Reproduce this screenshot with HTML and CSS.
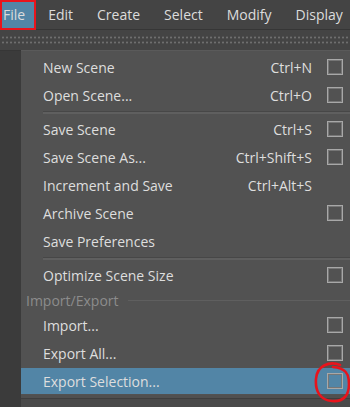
FILE: index.html
```html
<!DOCTYPE html>
<html lang="en">
<head>
    <meta charset="UTF-8">
    <title>File Menu</title>
    <link rel="stylesheet" href="styles.css">
</head>
<body>
    <div class="menubar">
        <span class="bar-item active">File</span>
        <span class="bar-item">Edit</span>
        <span class="bar-item">Create</span>
        <span class="bar-item">Select</span>
        <span class="bar-item">Modify</span>
        <span class="bar-item">Display</span>
    </div>
    <div class="shelf"></div>
    <div class="workspace">
        <div class="side"></div>
        <div class="menu">
            <div class="item"><span class="label">New Scene</span><span class="key">Ctrl+N</span><span class="box"></span></div>
            <div class="item"><span class="label">Open Scene...</span><span class="key">Ctrl+O</span><span class="box"></span></div>
            <div class="sep"></div>
            <div class="item"><span class="label">Save Scene</span><span class="key">Ctrl+S</span><span class="box"></span></div>
            <div class="item"><span class="label">Save Scene As...</span><span class="key">Ctrl+Shift+S</span><span class="box"></span></div>
            <div class="item"><span class="label">Increment and Save</span><span class="key">Ctrl+Alt+S</span><span class="nobox"></span></div>
            <div class="item"><span class="label">Archive Scene</span><span class="key"></span><span class="box"></span></div>
            <div class="item"><span class="label">Save Preferences</span><span class="key"></span><span class="nobox"></span></div>
            <div class="sep"></div>
            <div class="item"><span class="label">Optimize Scene Size</span><span class="key"></span><span class="box"></span></div>
            <div class="section"><span>Import/Export</span></div>
            <div class="item"><span class="label">Import...</span><span class="key"></span><span class="box"></span></div>
            <div class="item"><span class="label">Export All...</span><span class="key"></span><span class="box"></span></div>
            <div class="item hover"><span class="label">Export Selection...</span><span class="key"></span><span class="box"></span></div>
            <div class="menu-foot"></div>
        </div>
    </div>

    <!-- annotations -->
    <div class="mark-rect"></div>
    <svg class="mark-circle" width="40" height="44" viewBox="0 0 40 44">
        <path d="M28 5 C18 1 5 5 4 19 C3 31 8 40 20 41 C32 42 37 35 37 24 C37 13 33 8 21 7" fill="none" stroke="#e8141c" stroke-width="2.6" stroke-linecap="round"/>
    </svg>
</body>
</html>
```

FILE: styles.css
```css
* {
    margin: 0;
    padding: 0;
    box-sizing: border-box;
}

body {
    width: 350px;
    height: 407px;
    overflow: hidden;
    position: relative;
    background: #3b3b3b;
    font-family: 'Open Sans', 'Noto Sans', sans-serif;
    font-size: 14px;
    color: #dedede;
}

.menubar {
    height: 29px;
    display: flex;
    align-items: stretch;
    background: #444444;
    margin-left: -9px;
    white-space: nowrap;
    font-size: 14px;
}

.bar-item {
    display: flex;
    align-items: center;
    padding: 0 12px 1px;
    color: #dcdcdc;
}

.bar-item.active {
    background: #5285a6;
    padding-right: 11px;
}

.shelf {
    height: 21px;
    background:
        radial-gradient(circle, #6e6e6e 0.9px, transparent 1.1px) 1px 5px / 4px 4.5px repeat-x,
        radial-gradient(circle, #6e6e6e 0.9px, transparent 1.1px) 1px 9.5px / 4px 4.5px repeat-x,
        #444444;
    border-top: 1px solid #363636;
}

.workspace {
    display: flex;
    height: 357px;
}

.side {
    width: 21px;
    background: #3b3b3b;
    border-top: 1px solid #363636;
}

.menu {
    flex: 1;
    background: #525252;
    border-top: 1px solid #5a5a5a;
    padding-top: 2px;
    display: flex;
    flex-direction: column;
}

.item {
    height: 26px;
    margin: 1px 0;
    display: flex;
    align-items: center;
    padding-left: 22px;
    padding-right: 7px;
    white-space: nowrap;
}

.item.hover {
    background: #5285a6;
}

.label {
    flex: 1;
}

.key {
    margin-right: 15px;
}

.box, .nobox {
    width: 16px;
    height: 16px;
}

.box {
    border: 1px solid #a8a8a8;
    box-shadow: inset 0 0 0 1px #767676;
}

.sep {
    height: 6px;
    display: flex;
    align-items: center;
    padding-left: 22px;
}

.sep::after {
    content: "";
    flex: 1;
    height: 2px;
    background: #5f5f5f;
    border-top: 1px solid #474747;
}

.section {
    height: 22px;
    display: flex;
    align-items: center;
    gap: 9px;
    padding-left: 5px;
    color: #8c8c8c;
}

.section::after {
    content: "";
    flex: 1;
    height: 1px;
    background: #5f5f5f;
}

.menu-foot {
    flex: 1;
    border-top: 3px solid #505050;
    background: #4a4a4a;
    box-shadow: inset 0 1px 0 #3e3e3e;
}

.mark-rect {
    position: absolute;
    left: 0;
    top: 0;
    width: 36px;
    height: 30px;
    border: 2px solid #e8141c;
}

.mark-circle {
    position: absolute;
    left: 312px;
    top: 360px;
}
```
